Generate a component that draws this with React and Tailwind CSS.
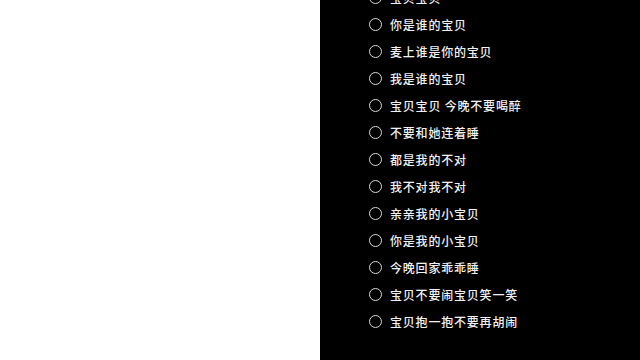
// Split screen: empty white half, black lyric checklist on the right.
const lines = [
  '宝贝宝贝',
  '你是谁的宝贝',
  '麦上谁是你的宝贝',
  '我是谁的宝贝',
  '宝贝宝贝 今晚不要喝醉',
  '不要和她连着睡',
  '都是我的不对',
  '我不对我不对',
  '亲亲我的小宝贝',
  '你是我的小宝贝',
  '今晚回家乖乖睡',
  '宝贝不要闹宝贝笑一笑',
  '宝贝抱一抱不要再胡闹',
];

export default function App() {
  return (
    <div className="flex w-[640px] h-[360px] overflow-hidden">
      <div className="w-[320px] bg-white" />
      <div className="w-[320px] bg-black overflow-hidden">
        <ul className="-mt-[16px] pl-[49px] flex flex-col">
          {lines.map((line, i) => (
            <li key={i} className="h-[27px] flex items-center gap-[8px]">
              <span className="w-[13px] h-[13px] rounded-full border border-[#d8d8d8] shrink-0" />
              <span
                className="text-[12px] tracking-[0.8px] text-[#f2f2f2] font-medium leading-none"
                style={{ fontFamily: '"Noto Sans CJK SC", "Noto Sans", sans-serif' }}
              >
                {line}
              </span>
            </li>
          ))}
        </ul>
      </div>
    </div>
  );
}
